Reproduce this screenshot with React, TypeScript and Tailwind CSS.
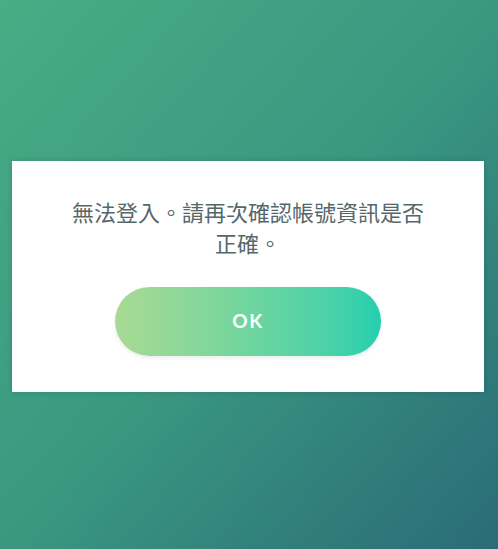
export default function App() {
  return (
    <div
      className="h-[549px] w-full overflow-hidden bg-gradient-to-br from-[#48ad85] via-[#3a9880] to-[#2b6b77] pt-[161px]"
      style={{ fontFamily: "'Noto Sans CJK TC', 'Noto Sans', sans-serif" }}
    >
      <div className="mx-3 flex h-[231px] w-[472px] flex-col items-center bg-white pt-[35px] shadow-[0_0_6px_rgba(0,0,0,0.15)]">
        <p className="w-[362px] text-center text-[22px] leading-[31px] text-[#56676a]">
          無法登入。請再次確認帳號資訊是否正確。
        </p>
        <button className="mt-[29px] flex h-[69px] w-[266px] items-center justify-center rounded-full bg-gradient-to-r from-[#a8da93] via-[#6fd59e] to-[#22cfaf] text-[19px] font-bold tracking-[0.08em] text-white shadow-[0_2px_4px_rgba(0,0,0,0.08)]"
          style={{ fontFamily: "'Lato', 'Open Sans', sans-serif" }}>
          OK
        </button>
      </div>
    </div>
  );
}
